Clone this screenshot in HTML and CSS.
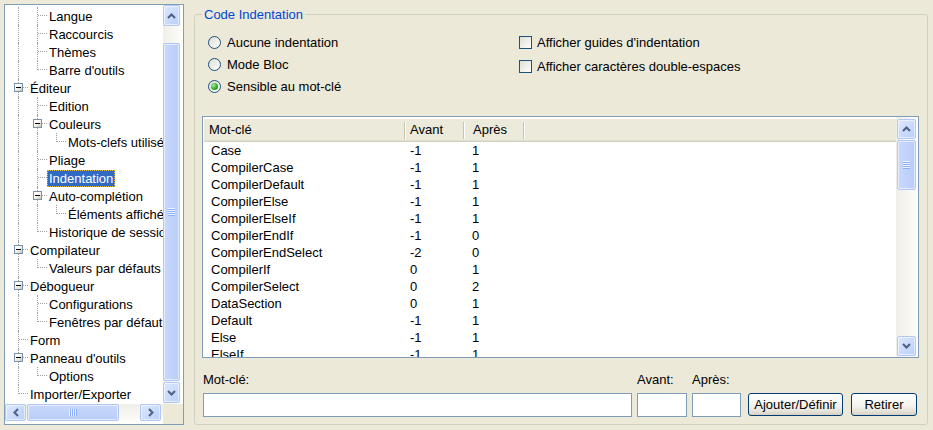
FILE: index.html
```html
<!DOCTYPE html>
<html lang="fr">
<head>
<meta charset="utf-8">
<title>Préférences</title>
<link rel="stylesheet" href="styles.css">
</head>
<body>
<div class="tree">
  <div class="tree-client">
    <div class="row"><span class="cell l"></span><span class="cell t"></span><span class="lbl">Langue</span></div>
    <div class="row"><span class="cell l"></span><span class="cell t"></span><span class="lbl">Raccourcis</span></div>
    <div class="row"><span class="cell l"></span><span class="cell t"></span><span class="lbl">Thèmes</span></div>
    <div class="row"><span class="cell l"></span><span class="cell c"></span><span class="lbl">Barre d'outils</span></div>
    <div class="row"><span class="cell t"><span class="box"></span></span><span class="lbl">Éditeur</span></div>
    <div class="row"><span class="cell l"></span><span class="cell t"></span><span class="lbl">Edition</span></div>
    <div class="row"><span class="cell l"></span><span class="cell t"><span class="box"></span></span><span class="lbl">Couleurs</span></div>
    <div class="row"><span class="cell l"></span><span class="cell l"></span><span class="cell c"></span><span class="lbl">Mots-clefs utilisés</span></div>
    <div class="row"><span class="cell l"></span><span class="cell t"></span><span class="lbl">Pliage</span></div>
    <div class="row"><span class="cell l"></span><span class="cell t"></span><span class="lbl sel">Indentation</span></div>
    <div class="row"><span class="cell l"></span><span class="cell t"><span class="box"></span></span><span class="lbl">Auto-complétion</span></div>
    <div class="row"><span class="cell l"></span><span class="cell l"></span><span class="cell c"></span><span class="lbl">Éléments affichés</span></div>
    <div class="row"><span class="cell l"></span><span class="cell c"></span><span class="lbl">Historique de session</span></div>
    <div class="row"><span class="cell t"><span class="box"></span></span><span class="lbl">Compilateur</span></div>
    <div class="row"><span class="cell l"></span><span class="cell c"></span><span class="lbl">Valeurs par défauts</span></div>
    <div class="row"><span class="cell t"><span class="box"></span></span><span class="lbl">Débogueur</span></div>
    <div class="row"><span class="cell l"></span><span class="cell t"></span><span class="lbl">Configurations</span></div>
    <div class="row"><span class="cell l"></span><span class="cell c"></span><span class="lbl">Fenêtres par défaut</span></div>
    <div class="row"><span class="cell t"></span><span class="lbl">Form</span></div>
    <div class="row"><span class="cell t"><span class="box"></span></span><span class="lbl">Panneau d'outils</span></div>
    <div class="row"><span class="cell l"></span><span class="cell c"></span><span class="lbl">Options</span></div>
    <div class="row"><span class="cell c"></span><span class="lbl">Importer/Exporter</span></div>
  </div>
  <div class="vscroll tree-v">
    <div class="sbtn vbtn"><svg width="9" height="6" viewBox="0 0 9 6"><path d="M1 5 L4.5 1.5 L8 5" fill="none" stroke="#4D6185" stroke-width="2"/></svg></div>
    <div class="tv-gap"></div>
    <div class="sbtn thumb tree-thumb"><span class="grip-v"></span></div>
    <div class="sbtn vbtn down"><svg width="9" height="6" viewBox="0 0 9 6"><path d="M1 1 L4.5 4.5 L8 1" fill="none" stroke="#4D6185" stroke-width="2"/></svg></div>
  </div>
  <div class="hscroll">
    <div class="sbtn hbtn"><svg width="6" height="9" viewBox="0 0 6 9"><path d="M5 1 L1.5 4.5 L5 8" fill="none" stroke="#4D6185" stroke-width="2"/></svg></div>
    <div class="sbtn thumb hthumb"><span class="grip-h"></span></div>
    <div class="htrack"></div>
    <div class="sbtn hbtn"><svg width="6" height="9" viewBox="0 0 6 9"><path d="M1 1 L4.5 4.5 L1 8" fill="none" stroke="#4D6185" stroke-width="2"/></svg></div>
  </div>
  <div class="corner"></div>
</div>

<fieldset class="group">
  <legend>Code Indentation</legend>
  <div class="opts">
    <div class="radios">
      <div class="opt"><span class="radio"></span>Aucune indentation</div>
      <div class="opt"><span class="radio"></span>Mode Bloc</div>
      <div class="opt"><span class="radio on"></span>Sensible au mot-clé</div>
    </div>
    <div class="checks">
      <div class="opt"><span class="check"></span>Afficher guides d'indentation</div>
      <div class="opt"><span class="check"></span>Afficher caractères double-espaces</div>
    </div>
  </div>

  <div class="list">
    <div class="list-main">
      <div class="lh">
        <div class="hc c1">Mot-clé</div>
        <div class="hc c2">Avant</div>
        <div class="hc c3">Après</div>
      </div>
      <div class="lr"><span class="d1">Case</span><span class="d2">-1</span><span class="d3">1</span></div>
      <div class="lr"><span class="d1">CompilerCase</span><span class="d2">-1</span><span class="d3">1</span></div>
      <div class="lr"><span class="d1">CompilerDefault</span><span class="d2">-1</span><span class="d3">1</span></div>
      <div class="lr"><span class="d1">CompilerElse</span><span class="d2">-1</span><span class="d3">1</span></div>
      <div class="lr"><span class="d1">CompilerElseIf</span><span class="d2">-1</span><span class="d3">1</span></div>
      <div class="lr"><span class="d1">CompilerEndIf</span><span class="d2">-1</span><span class="d3">0</span></div>
      <div class="lr"><span class="d1">CompilerEndSelect</span><span class="d2">-2</span><span class="d3">0</span></div>
      <div class="lr"><span class="d1">CompilerIf</span><span class="d2">0</span><span class="d3">1</span></div>
      <div class="lr"><span class="d1">CompilerSelect</span><span class="d2">0</span><span class="d3">2</span></div>
      <div class="lr"><span class="d1">DataSection</span><span class="d2">0</span><span class="d3">1</span></div>
      <div class="lr"><span class="d1">Default</span><span class="d2">-1</span><span class="d3">1</span></div>
      <div class="lr"><span class="d1">Else</span><span class="d2">-1</span><span class="d3">1</span></div>
      <div class="lr"><span class="d1">ElseIf</span><span class="d2">-1</span><span class="d3">1</span></div>
    </div>
    <div class="vscroll list-v">
      <div class="sbtn lbtn"><svg width="9" height="6" viewBox="0 0 9 6"><path d="M1 5 L4.5 1.5 L8 5" fill="none" stroke="#4D6185" stroke-width="2"/></svg></div>
      <div class="sbtn thumb list-thumb"><span class="grip-v"></span></div>
      <div class="ltrack"></div>
      <div class="sbtn lbtn"><svg width="9" height="6" viewBox="0 0 9 6"><path d="M1 1 L4.5 4.5 L8 1" fill="none" stroke="#4D6185" stroke-width="2"/></svg></div>
    </div>
  </div>

  <div class="form">
    <div class="field kw"><span class="flabel">Mot-clé:</span><input class="inp" type="text"></div>
    <div class="field av"><span class="flabel">Avant:</span><input class="inp" type="text"></div>
    <div class="field ap"><span class="flabel">Après:</span><input class="inp" type="text"></div>
    <button class="btn b1" type="button">Ajouter/Définir</button>
    <button class="btn b2" type="button">Retirer</button>
  </div>
</fieldset>
</body>
</html>
```

FILE: styles.css
```css
* { box-sizing: border-box; }
html, body { margin: 0; height: 100%; }
body {
  background: #ECE9D8;
  font: 13px/15px "Liberation Sans", Arial, sans-serif;
  color: #000;
  display: flex;
  align-items: flex-start;
  padding: 4px 5px 0 4px;
  overflow: hidden;
}

/* ---------- tree ---------- */
.tree {
  flex: none;
  width: 180px;
  height: 421px;
  border: 1px solid #7F9DB9;
  background: #fff;
  display: grid;
  grid-template-columns: 158px 20px;
  grid-template-rows: 399px 20px;
}
.tree-client { overflow: hidden; padding: 2px 0 0 4px; }
.row { display: flex; height: 18px; white-space: nowrap; }
.cell { position: relative; flex: none; width: 19px; height: 18px; }
.cell.l::before, .cell.t::before, .cell.c::before {
  content: "";
  position: absolute;
  left: 9px;
  top: 0;
  bottom: 0;
  border-left: 1px dotted #A0A0A0;
}
.cell.c::before { bottom: 9px; }
.cell.t::after, .cell.c::after {
  content: "";
  position: absolute;
  left: 10px;
  right: 0;
  top: 8px;
  border-top: 1px dotted #A0A0A0;
}
.box {
  position: absolute;
  z-index: 1;
  left: 5px;
  top: 4px;
  width: 9px;
  height: 9px;
  border: 1px solid #7B92AE;
  background: linear-gradient(135deg, #fff 35%, #C8C4B4);
}
.box::after {
  content: "";
  position: absolute;
  left: 1px;
  top: 3px;
  width: 5px;
  height: 1px;
  background: #000;
}
.lbl { flex: none; padding: 0 2px; line-height: 17px; height: 17px; margin-top: 1px; }
.lbl.sel {
  background: #316AC5;
  color: #fff;
  outline: 1px dotted #E8C040;
  outline-offset: -1px;
}

/* ---------- scrollbars ---------- */
.sbtn {
  display: flex;
  align-items: center;
  justify-content: center;
  border: 1px solid #B3C7F3;
  border-radius: 2px;
  background: linear-gradient(135deg, #DDE8FE, #BACFF9);
  box-shadow: inset 0 0 0 1px rgba(255,255,255,0.55);
}
.thumb { background: linear-gradient(to right, #C9D8FC, #B9CDF8); }
.grip-v {
  width: 7px;
  height: 8px;
  background: repeating-linear-gradient(to bottom, #EEF4FE 0 1px, #8CB0F8 1px 2px);
}
.grip-h {
  width: 8px;
  height: 7px;
  background: repeating-linear-gradient(to right, #EEF4FE 0 1px, #8CB0F8 1px 2px);
}
.vscroll {
  display: flex;
  flex-direction: column;
  background: linear-gradient(to right, #EFEEE7, #FEFEFB);
}
.tree-v { padding: 0 3px 1px 0; }
.tree-v .vbtn { height: 21px; flex: none; }
.tv-gap { height: 17px; flex: none; }
.tree-thumb { flex: 1; }
.tree-v .down { margin-top: 1px; }

.hscroll {
  display: flex;
  padding: 0 2px 3px 0;
  background: linear-gradient(to bottom, #EFEEE7, #FEFEFB);
}
.hbtn { width: 21px; flex: none; }
.hthumb { width: 92px; margin-left: 1px; flex: none; background: linear-gradient(to bottom, #C9D8FC, #B9CDF8); }
.htrack { flex: 1; }
.corner { background: #ECE9D8; }

/* ---------- group box ---------- */
.group {
  flex: 1;
  min-width: 0;
  margin: 3px 0 0 10px;
  height: 418px;
  border: 1px solid #D0D0BF;
  border-radius: 3px;
  padding: 0;
}
.group legend {
  margin-left: 7px;
  padding: 0 2px;
  color: #0046D5;
  line-height: 15px;
}
.opts {
  display: grid;
  grid-template-columns: 311px 1fr;
  height: 94px;
  padding: 9px 0 0 13px;
}
.radios .opt { height: 22px; display: flex; align-items: center; gap: 6px; white-space: nowrap; }
.checks .opt { height: 24px; display: flex; align-items: center; gap: 5px; white-space: nowrap; }
.checks { margin-top: -1px; }
.radio {
  position: relative;
  flex: none;
  width: 13px;
  height: 13px;
  border: 1px solid #1C5180;
  border-radius: 50%;
  background: linear-gradient(135deg, #DCDCD7, #fff);
}
.radio.on::after {
  content: "";
  position: absolute;
  left: 2px;
  top: 2px;
  width: 7px;
  height: 7px;
  border-radius: 50%;
  background: radial-gradient(circle at 35% 35%, #A8EE98, #2DAA2E 55%, #188418);
}
.check {
  flex: none;
  width: 13px;
  height: 13px;
  border: 1px solid #1C5180;
  background: linear-gradient(135deg, #DCDCD7, #fff);
}

/* ---------- list view ---------- */
.list {
  margin: 0 8px 0 7px;
  height: 242px;
  border: 1px solid #7F9DB9;
  background: #fff;
  display: flex;
}
.list-main { flex: 1; min-width: 0; overflow: hidden; padding: 2px 0 0 1px; }
.lh {
  display: flex;
  height: 23px;
  background: #EBEADB;
  box-shadow: inset 0 -1px #D6D2C2, inset 0 -2px #E2DECD;
}
.hc { position: relative; line-height: 22px; white-space: nowrap; }
.hc::after {
  content: "";
  position: absolute;
  right: 1px;
  top: 3px;
  bottom: 3px;
  width: 1px;
  background: #C7C5B2;
  box-shadow: 1px 0 #fff;
}
.c1 { width: 202px; padding-left: 5px; }
.c2 { width: 59px; padding-left: 4px; }
.c3 { width: 60px; padding-left: 8px; }
.lr { display: flex; height: 17px; line-height: 17px; white-space: nowrap; }
.d1 { width: 202px; padding-left: 7px; }
.d2 { width: 59px; padding-left: 4px; }
.d3 { width: 60px; padding-left: 7px; }

.list-v { width: 22px; flex: none; padding: 2px 2px 1px 1px; }
.lbtn { height: 20px; flex: none; }
.list-thumb { height: 50px; flex: none; margin-top: 1px; }
.ltrack { flex: 1; }

/* ---------- bottom form ---------- */
.form {
  display: flex;
  align-items: flex-end;
  margin: 14px 0 0 8px;
}
.field { display: flex; flex-direction: column; gap: 6px; flex: none; }
.flabel { line-height: 15px; white-space: nowrap; }
.kw { width: 429px; }
.av { width: 50px; margin-left: 5px; }
.ap { width: 49px; margin-left: 5px; }
.inp {
  width: 100%;
  height: 24px;
  border: 1px solid #7F9DB9;
  background: #fff;
  font: inherit;
  padding: 0 3px;
  margin: 0;
}
.btn {
  flex: none;
  height: 23px;
  margin-bottom: 1px;
  font: inherit;
  color: #000;
  padding: 0;
  border: 1px solid #003C74;
  border-radius: 3px;
  background: linear-gradient(to bottom, #FFFFFF, #F4F3EE 55%, #E3E0D6 85%, #D6D0C5);
}
.b1 { width: 95px; margin-left: 7px; }
.b2 { width: 66px; margin-left: 8px; }
```
